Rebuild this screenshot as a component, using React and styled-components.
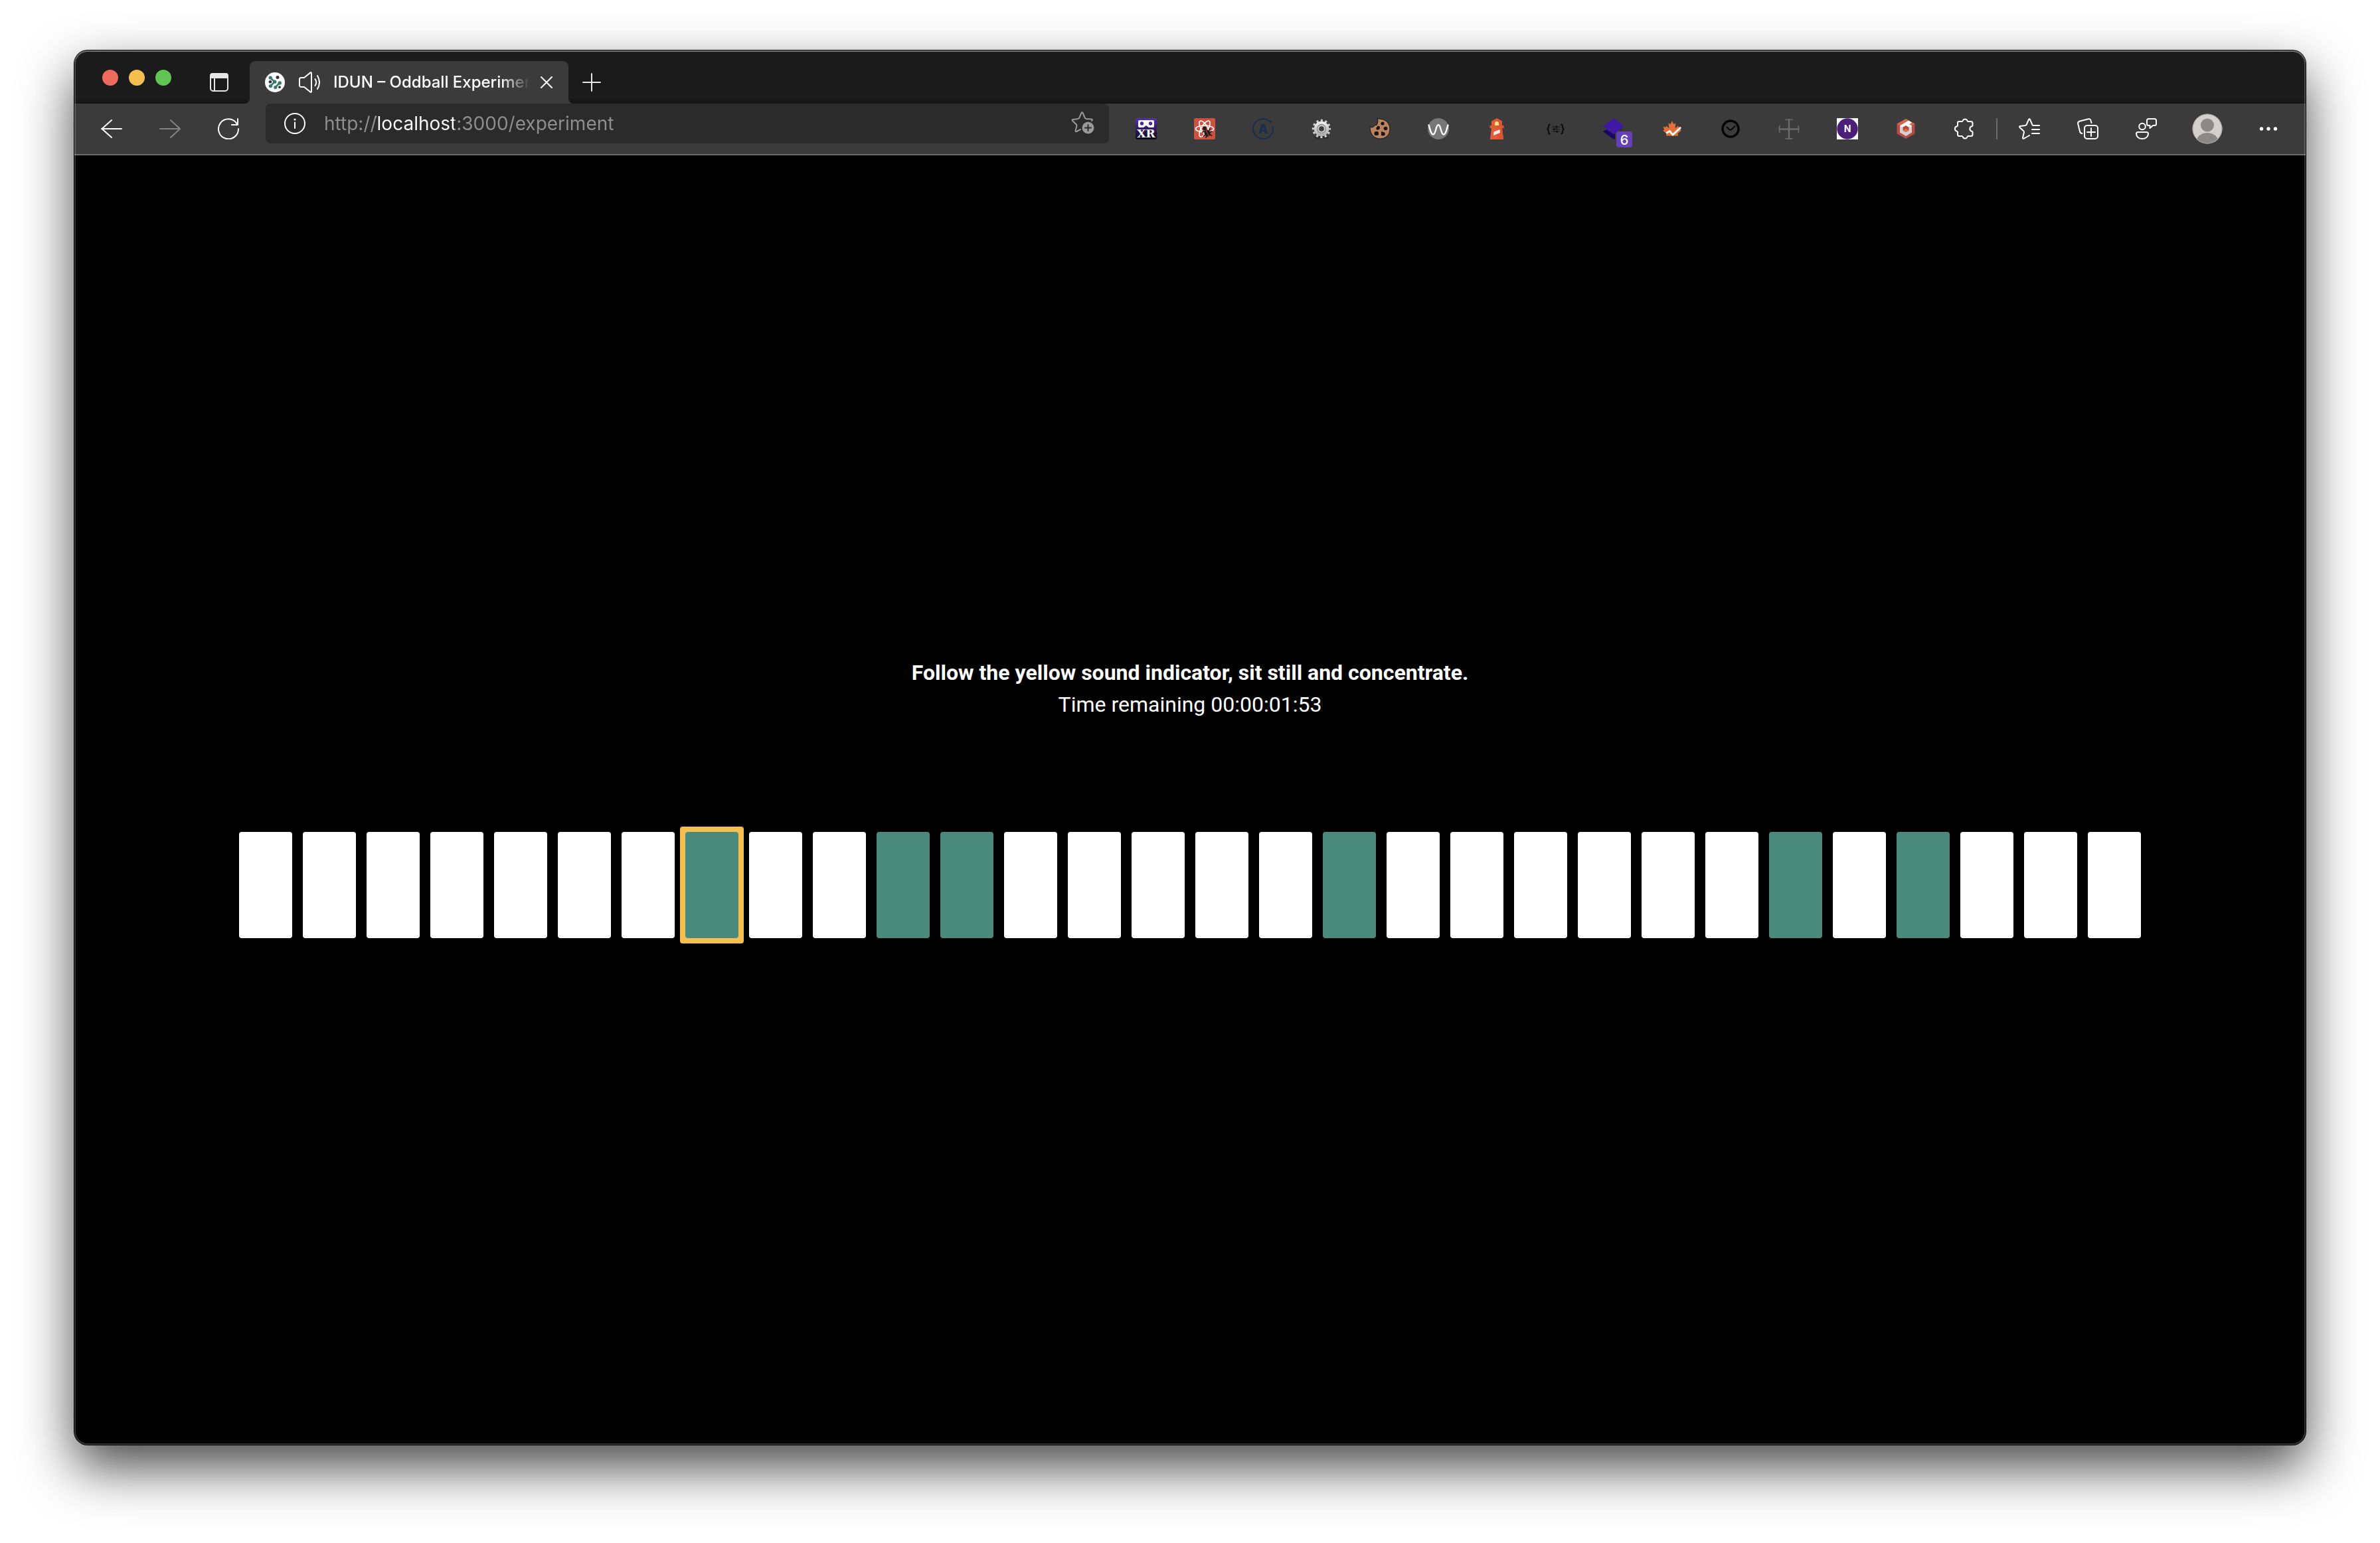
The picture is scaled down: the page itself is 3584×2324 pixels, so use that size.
import React from "react";
import styled, { createGlobalStyle, css } from "styled-components";

const colors = {
  frame: "#1b1b1b",
  chrome: "#3b3b3b",
  field: "#2b2b2b",
  line: "#6a6a6a",
  muted: "#8f8f8f",
  teal: "#4a8a7d",
  yellow: "#f4bf4f",
};

const GlobalStyle = createGlobalStyle`
  *, *::before, *::after { box-sizing: border-box; }
  body { margin: 0; background: #fff; }
  button, input { font: inherit; color: inherit; }
`;

const Desktop = styled.div`
  display: flex;
  min-height: 100vh;
  padding: 76px 112px 148px;
  color: #fff;
  font-family: Inter, "Liberation Sans", sans-serif;
`;

const BrowserWindow = styled.div`
  position: relative;
  display: flex;
  flex: 1;
  flex-direction: column;
  min-width: 0;
  border-radius: 20px;
  background: #000;
  box-shadow: 0 0 0 1px #000, 0 34px 80px rgba(0, 0, 0, 0.72);

  &::after {
    content: "";
    position: absolute;
    inset: 0;
    border-radius: inherit;
    box-shadow: inset 0 2px 0 rgba(255, 255, 255, 0.24),
      inset 0 0 0 2px rgba(255, 255, 255, 0.2);
    pointer-events: none;
  }
`;

const TitleBar = styled.header`
  display: flex;
  align-items: flex-end;
  height: 80px;
  padding-left: 42px;
  border-radius: 20px 20px 0 0;
  background: linear-gradient(to top, #141414, ${colors.frame} 8px);
`;

const TrafficLights = styled.div`
  display: flex;
  align-self: center;
  gap: 16px;
  padding-top: 2px;
`;

const Light = styled.button`
  width: 24px;
  height: 24px;
  padding: 0;
  border: 0;
  border-radius: 50%;
  background: ${(p) => p.$color};
`;

const IconButton = styled.button`
  display: flex;
  flex: none;
  align-items: center;
  justify-content: center;
  width: ${(p) => p.$width || 88}px;
  height: 64px;
  padding: 0;
  border: 0;
  background: none;
  color: ${(p) => p.$color || "#fff"};

  svg {
    display: block;
  }
`;

const TabActions = styled(IconButton)`
  margin: 0 16px 0 42px;
`;

const tabFoot = css`
  content: "";
  position: absolute;
  bottom: 0;
  width: 8px;
  height: 8px;
`;

const Tab = styled.div`
  position: relative;
  display: flex;
  align-items: center;
  gap: 20px;
  width: 480px;
  height: 64px;
  padding: 0 12px 0 22px;
  border-radius: 8px 8px 0 0;
  background: ${colors.chrome};

  &::before {
    ${tabFoot}
    right: 100%;
    background: radial-gradient(circle at 0 0, transparent 8px, ${colors.chrome} 8px);
  }
  &::after {
    ${tabFoot}
    left: 100%;
    background: radial-gradient(circle at 100% 0, transparent 8px, ${colors.chrome} 8px);
  }
  & > svg {
    flex: none;
  }
`;

const TabTitle = styled.span`
  flex: 1;
  min-width: 0;
  margin-right: -16px;
  overflow: hidden;
  font-size: 24px;
  font-weight: 500;
  line-height: 32px;
  white-space: nowrap;
  mask-image: linear-gradient(to left, transparent, #000 44px);
`;

const Toolbar = styled.nav`
  display: flex;
  align-items: center;
  height: 78px;
  padding: 0 12px;
  border-bottom: 2px solid ${colors.line};
  background: ${colors.chrome};
`;

const AddressBar = styled.form`
  display: flex;
  flex: 1;
  align-items: center;
  align-self: flex-start;
  min-width: 0;
  height: 60px;
  margin: 0 12px;
  border-radius: 8px;
  background: ${colors.field};
`;

const Address = styled.input`
  flex: 1;
  min-width: 0;
  height: 60px;
  padding: 0;
  border: 0;
  outline: 0;
  background: linear-gradient(
    to right,
    ${colors.muted} 78px,
    #fff 78px 196px,
    ${colors.muted} 196px
  );
  background-clip: text;
  -webkit-background-clip: text;
  -webkit-text-fill-color: transparent;
  font-size: 28px;
`;

const Divider = styled.span`
  width: 2px;
  height: 32px;
  margin: 0 4px;
  background: ${colors.line};
`;

const IconWithBadge = styled.span`
  position: relative;
`;

const Badge = styled.span`
  position: absolute;
  top: 20px;
  left: 20px;
  width: 24px;
  height: 24px;
  border-radius: 4px;
  background: #6640b7;
  font-size: 20px;
  font-weight: 500;
  line-height: 26px;
  text-align: center;
`;

const Experiment = styled.main`
  display: flex;
  flex: 1;
  flex-direction: column;
  align-items: center;
  justify-content: center;
  gap: 160px;
  font-family: Roboto, sans-serif;
`;

const Message = styled.div`
  font-size: 32px;
  line-height: 48px;
  text-align: center;
`;

const Instruction = styled.h1`
  margin: 0;
  font-size: inherit;
  font-weight: 700;
`;

const Remaining = styled.p`
  margin: 0;
`;

const Sequence = styled.ol`
  display: flex;
  justify-content: center;
  width: 100%;
  margin: 0;
  padding: 0;
  list-style: none;
`;

const Slot = styled.li`
  flex: 0 1 96px;
  padding: 8px;
  border-radius: 4px;
  background: ${(p) => (p.$active ? colors.yellow : "transparent")};
`;

const Tone = styled.div`
  height: 160px;
  border-radius: 4px;
  background: ${(p) => (p.$odd ? colors.teal : "#fff")};
`;

function Icon({ size = 32, width = 2, children }) {
  return (
    <svg
      width={size}
      height={size}
      viewBox={`0 0 ${size} ${size}`}
      fill="none"
      stroke="currentColor"
      strokeWidth={width}
      strokeLinecap="round"
      strokeLinejoin="round"
      aria-hidden="true"
    >
      {children}
    </svg>
  );
}

const TabActionsIcon = () => (
  <Icon size={28}>
    <rect x="1" y="1" width="26" height="26" rx="4" />
    <path d="M0 8V4a4 4 0 0 1 4-4h20a4 4 0 0 1 4 4v4z" fill="currentColor" stroke="none" />
    <path d="M7 8v19" />
  </Icon>
);

const IdunIcon = () => (
  <Icon width={2.6}>
    <circle cx="16" cy="16" r="15" fill="#fff" stroke="none" />
    <g stroke="#38786f">
      <path d="M9 9l6.5 6.2-6 6.3M17 23l6-6" />
    </g>
    <g fill="#38786f" stroke="none">
      <circle cx="9.2" cy="9" r="2.6" />
      <circle cx="15.8" cy="15.2" r="2.6" />
      <circle cx="9.5" cy="21.6" r="2.7" />
      <circle cx="16.8" cy="23.6" r="2.6" />
      <circle cx="23.2" cy="17" r="2.8" />
    </g>
    <g fill="#333" stroke="none">
      <circle cx="20" cy="8.4" r="2.5" />
      <circle cx="9" cy="15.2" r="2.3" />
      <circle cx="23" cy="23.2" r="1.9" />
    </g>
  </Icon>
);

const SpeakerIcon = () => (
  <Icon>
    <path d="M8 9h-4.500a2.500 2.500 0 0 0-2.500 2.500v9a2.500 2.500 0 0 0 2.500 2.500H8l9.500 7.600c.8.600 1.500.3 1.500-.6v-28c0-.9-.7-1.200-1.500-.6z" />
    <path d="M24.500 11q3.500 5 0 10M28 6q6 10 0 20" />
  </Icon>
);

const CloseIcon = () => (
  <Icon size={18}>
    <path d="M1 1l16 16M17 1L1 17" />
  </Icon>
);

const PlusIcon = () => (
  <Icon size={28}>
    <path d="M14 1v26M1 14h26" />
  </Icon>
);

const BackIcon = () => (
  <Icon>
    <path d="M31 16H1M16 3L1.500 16 16 29" />
  </Icon>
);

const ForwardIcon = () => (
  <Icon>
    <path d="M1 16h30M17 3l14 13-14 13" />
  </Icon>
);

const ReloadIcon = () => (
  <Icon>
    <path d="M31 16A15 15 0 1 1 28.500 8" />
    <path d="M30 1v9h-9" />
  </Icon>
);

const InfoIcon = () => (
  <Icon>
    <circle cx="16" cy="16" r="15" />
    <path d="M16 14.500V23" />
    <circle cx="16" cy="10" r="1.600" fill="currentColor" stroke="none" />
  </Icon>
);

const AddFavoriteIcon = () => (
  <Icon size={36}>
    <path d="M31 14l1-1.500-1-1-8.500-.5-1.500-1-3.500-8c-.5-1-1.500-1-2 0l-3.500 8-1.500 1-8 1c-1 0-1.200 1-.5 1.700l6 6 .5 1.800L6.500 29c0 1 .8 1.500 1.600 1l5.900-3" />
    <circle cx="25.500" cy="24.500" r="9" fill="currentColor" stroke="none" />
    <path d="M25.500 20v9M21 24.500h9" stroke={colors.field} />
  </Icon>
);

const XrIcon = () => (
  <Icon>
    <defs>
      <linearGradient id="xr" x1="0" y1="0" x2="0" y2="1">
        <stop offset="0" stopColor="#5530ab" />
        <stop offset="1" stopColor="#0b0818" />
      </linearGradient>
    </defs>
    <g stroke="none">
      <rect width="32" height="32" rx="3" fill="url(#xr)" />
      <path d="M6 3h20q2 0 2 2v7q0 2-2 2h-6l-4-3-4 3H6q-2 0-2-2V5q0-2 2-2z" fill="#fff" />
      <circle cx="9.500" cy="8" r="2.700" fill="#47288f" />
      <circle cx="22.500" cy="8" r="2.700" fill="#47288f" />
      <text x="16" y="29" fill="#fff" fontFamily="DejaVu Serif, serif" fontSize="17" fontWeight="700" textAnchor="middle">
        XR
      </text>
    </g>
  </Icon>
);

const ReactIcon = () => (
  <Icon width={1.7}>
    <rect width="32" height="32" rx="2" fill="#cb5140" stroke="none" />
    <g stroke="#fff">
      <ellipse cx="16" cy="16" rx="13.500" ry="5" />
      <ellipse cx="16" cy="16" rx="13.500" ry="5" transform="rotate(60 16 16)" />
      <ellipse cx="16" cy="16" rx="13.500" ry="5" transform="rotate(120 16 16)" />
    </g>
    <g fill="#1d1b1c" stroke="#1d1b1c">
      <path d="M15 19l9-1 3 8-4 5-6-1z" fill="#cb5140" stroke="none" />
      <circle cx="16" cy="15.500" r="2.800" stroke="none" />
      <ellipse cx="20" cy="22.500" rx="4.200" ry="5.500" transform="rotate(-28 20 22.500)" stroke="none" />
      <path d="M15 20l-2 1M16.500 25l-2 2M19 27l-1 2M23 18l1-2M24 21l3-1M24.500 25l2 1" />
      <path d="M18 18l4.500 9" stroke="#cb5140" strokeWidth="1" />
    </g>
  </Icon>
);

const ApolloIcon = () => (
  <Icon>
    <g stroke="#1b2d4d">
      <path d="M30.500 12A15 15 0 1 1 25 4" />
      <circle cx="27.500" cy="5.500" r="2" fill="#1b2d4d" stroke="none" />
      <text x="16" y="22.500" fill="#1b2d4d" stroke="none" fontSize="19" fontWeight="800" textAnchor="middle">
        A
      </text>
    </g>
  </Icon>
);

const GearIcon = () => (
  <Icon>
    <defs>
      <linearGradient id="gear" x1="0" y1="0" x2="0" y2="1">
        <stop offset="0" stopColor="#f2f2f2" />
        <stop offset="1" stopColor="#a9a9a9" />
      </linearGradient>
    </defs>
    <ellipse cx="16" cy="29" rx="11" ry="2.500" fill="#2b2b2b" stroke="none" />
    <circle cx="16" cy="16" r="12.500" stroke="#cfcfcf" strokeWidth="3.400" strokeLinecap="butt" strokeDasharray="3.100 3.445" strokeDashoffset="1.550" />
    <circle cx="16" cy="16" r="11.300" fill="url(#gear)" stroke="none" />
    <circle cx="16" cy="16" r="6.500" fill="#c9c9c9" stroke="#8d8d8d" strokeWidth="1.400" />
    <circle cx="16" cy="16" r="3.800" fill="#3b3b3b" stroke="none" />
  </Icon>
);

const CookieIcon = () => (
  <Icon width={1}>
    <path
      d="M12 1C22 0 31 6 31 16S24 31 16 31 1 25 1 13c2 1 4 1 5.500 0 1-2 2-2.500 4.500-2.500C13 7 13.500 4 12 1z"
      fill="#b9835f"
      stroke="#151010"
    />
    <g fill="#1b1412" stroke="none">
      <circle cx="20" cy="8" r="2.600" />
      <path d="M10 15l3-3.500 3 1-.5 4-4 1.500z" />
      <circle cx="24.500" cy="15.500" r="2.800" />
      <rect x="7.500" y="20" width="6.500" height="6" rx="2.500" />
      <path d="M18 20l5 1.500 1 3-2 2-4-.5z" />
    </g>
  </Icon>
);

const WaveIcon = () => (
  <Icon width={2.4}>
    <circle cx="16" cy="16" r="16" fill="#777" stroke="none" />
    <path d="M1.500 10.500C3 13 4 24 8 24.500c4.500 0 4-14.500 8-14.500s3.500 14.500 8 14.500c4 0 5-11 6.500-14" stroke="#fff" />
  </Icon>
);

const LighthouseIcon = () => (
  <Icon>
    <g stroke="none">
      <path d="M16 0l8 4.500V11h2.500v4H24l2.200 17H5.800L8 15H5.500v-4H8V4.500z" fill="#e55b36" />
      <path d="M16 0l8 4.500V11h2.500v4H24l2.200 17H16z" fill="#d9552f" opacity=".7" />
      <path d="M13 11V8a3 3 0 0 1 6 0v3z" fill="#f7e48c" />
      <path d="M11.500 20.500l9-3.500.5 5-10 4z" fill="#ededed" />
    </g>
  </Icon>
);

const BracesIcon = () => (
  <Icon>
    <g stroke="#0c0c0c">
      <path d="M8 9.500q-2 0-2 2.500c0 2.500 0 4-2 4.500 2 .5 2 2 2 4.500q0 2.500 2 2.500M25 9.500q2 0 2 2.500c0 2.500 0 4 2 4.500-2 .5-2 2-2 4.500q0 2.500-2 2.500" />
      <path d="M12 13h10M12 16.500h10M12 20h10" strokeWidth="1.200" />
      <path d="M18 12v2M14.500 15.500v2M18.500 19v2" strokeWidth="1.800" />
    </g>
  </Icon>
);

const LayersIcon = () => (
  <IconWithBadge>
    <Icon>
      <g stroke="none">
        <path d="M0 20l5-3 11 7 2-1v8l-2 1z" fill="#190766" />
        <path d="M24 18l3-1 2 1z" fill="#190766" />
        <path d="M16 0l16 12-16 12L0 12z" fill="#4018a6" />
      </g>
    </Icon>
    <Badge>6</Badge>
  </IconWithBadge>
);

const LeafIcon = () => (
  <Icon width={2.6}>
    <path
      d="M16 4l2.500 5 3-1.500-1 8 4.500-4 1 2 4-.5-1.500 4 1.500 1.500-5.500 4.500.5 3.500H7l.5-3.500L2.500 19 4 17l-1.500-4 4 .5 1-2 4 4-1-8 3 1.500z"
      fill="#e2703a"
      stroke="none"
    />
    <path d="M7 22.500l5.500-3 4.500 5.500L29 14" stroke="#fff" strokeLinecap="butt" strokeLinejoin="miter" />
  </Icon>
);

const ClockIcon = () => (
  <Icon>
    <g stroke="#050505">
      <circle cx="16" cy="16" r="12" strokeWidth="3.400" />
      <path d="M10.500 13.500l4 4h2.500l5.500-5.500" strokeWidth="1.800" />
    </g>
  </Icon>
);

const CrossIcon = () => (
  <Icon width={1.6}>
    <g stroke="#6c6c6c">
      <path d="M16 2v29M2 16.500h28" strokeWidth="2.400" />
      <path d="M11 2.500q5-1.500 10 0M11 30.500q5 1.500 10 0M2 11.500q-1.500 5 0 10M30 11.500q1.500 5 0 10" />
    </g>
  </Icon>
);

const NIcon = () => (
  <Icon>
    <g stroke="none">
      <rect width="32" height="32" fill="#fff" />
      <circle cx="16" cy="16" r="15.700" fill="#4b1f78" />
      <text x="16" y="21" fill="#fff" fontSize="14" fontWeight="700" textAnchor="middle">
        N
      </text>
    </g>
  </Icon>
);

const HexIcon = () => (
  <Icon>
    <g stroke="none">
      <path d="M16 1l13.500 7.500v15L16 31 2.500 23.500v-15z" fill="#b44a4a" />
      <path d="M16 1l13.500 7.500L16 16 2.500 8.500z" fill="#d0694f" />
      <path d="M16 6.500l9 5v10l-9 5.500-9-5.500v-10z" fill="#d8d2cc" />
      <path d="M7 11.500l13-8 5 3-4 3 4 2-9 5z" fill="#fff" />
      <path d="M16 11l4.500 2.500v5L16 21l-4.500-2.500v-5z" fill="#b44a4a" />
      <path d="M11.500 18.500L16 16l4.500 2.500L16 21z" fill="#df7347" />
    </g>
  </Icon>
);

const PuzzleIcon = () => (
  <Icon>
    <path d="M8 5h4.500c.8 0 1-.6 1.200-1.200a3.600 3.600 0 0 1 6.800 0c.2.600.4 1.200 1.200 1.200H26q2.500 0 2.500 2.500V11c0 .8-.4 1.200-1.200 1.300a3.800 3.800 0 0 0 0 7.400c.8.100 1.200.5 1.200 1.300v3.500q0 2.500-2.500 2.500h-4.300c-.8 0-1 .6-1.200 1.200a3.600 3.600 0 0 1-6.800 0c-.2-.6-.4-1.200-1.200-1.200H8.500Q6 27 6 24.500V21c0-.8-.4-1.200-1.200-1.300a3.800 3.800 0 0 1 0-7.400C5.600 12.200 6 11.800 6 11V7q0-2 2-2z" />
  </Icon>
);

const FavoritesIcon = () => (
  <Icon>
    <path d="M31 11h-9.500l-1-.8L17 2c-.4-1-1.600-1-2 0l-3.500 8-1.500 1-8 1c-1 .2-1.200 1.200-.5 1.900l6 5.600.5 1.500L6 29.500c-.1 1.200.8 1.800 1.700 1.200L16 26M20 17h11M20 23h11" />
  </Icon>
);

const CollectionsIcon = () => (
  <Icon>
    <rect x="11" y="11" width="20" height="20" rx="4" />
    <path d="M21 15v12M15 21h12" />
    <path d="M21.500 7l-1-3.500c-.4-1.800-2-2.800-3.800-2.300L4 4.500C2 5 .8 6.500 1.200 8.500L4 20c.4 1.800 1.500 2.800 3.500 3" />
  </Icon>
);

const ShareIcon = () => (
  <Icon>
    <circle cx="10" cy="12.500" r="4.800" />
    <path d="M3.500 21h13q2.500 0 2.500 2.500c0 4.500-4 7.500-9 7.500s-9-3-9-7.500Q1 21 3.500 21z" />
    <path d="M19.500 1h9Q31 1 31 3.500v5q0 2.500-2.500 2.500H26l-4.500 4v-4h-2Q17 11 17 8.500v-5Q17 1 19.500 1z" />
  </Icon>
);

const AvatarIcon = () => (
  <Icon size={46}>
    <defs>
      <clipPath id="avatar">
        <circle cx="23" cy="23" r="22.500" />
      </clipPath>
    </defs>
    <g stroke="none" clipPath="url(#avatar)">
      <rect width="46" height="46" fill="#d2d1cd" />
      <circle cx="23" cy="17.500" r="10" fill="#8b8a88" />
      <ellipse cx="23" cy="43.500" rx="17" ry="14.500" fill="#8b8a88" />
    </g>
    <circle cx="23" cy="23" r="22" stroke="#a3a29f" strokeWidth="1" />
  </Icon>
);

const MoreIcon = () => (
  <Icon>
    <g fill="currentColor" stroke="none">
      <circle cx="5.500" cy="16" r="2.700" />
      <circle cx="16" cy="16" r="2.700" />
      <circle cx="26.500" cy="16" r="2.700" />
    </g>
  </Icon>
);

const extensions = [
  ["WebXR emulator", XrIcon],
  ["React developer tools", ReactIcon],
  ["Apollo client tools", ApolloIcon],
  ["Settings extension", GearIcon],
  ["Cookie editor", CookieIcon],
  ["Wave", WaveIcon],
  ["Lighthouse", LighthouseIcon],
  ["JSON viewer", BracesIcon],
  ["Layers", LayersIcon],
  ["Leaf", LeafIcon],
  ["Clock", ClockIcon],
  ["Crosshair", CrossIcon],
  ["N", NIcon],
  ["Hexagon", HexIcon],
  ["Extensions", PuzzleIcon],
];

const TONE_COUNT = 30;
const ACTIVE_TONE = 7;
const ODD_TONES = new Set([7, 10, 11, 17, 24, 26]);

export default function App() {
  return (
    <>
      <GlobalStyle />
      <Desktop>
        <BrowserWindow>
          <TitleBar>
            <TrafficLights>
              <Light $color="#ed6a5e" aria-label="Close window" />
              <Light $color="#f4bf4f" aria-label="Minimise window" />
              <Light $color="#61c554" aria-label="Zoom window" />
            </TrafficLights>
            <TabActions $width={60} $color="#e6e6e6" aria-label="Tab actions">
              <TabActionsIcon />
            </TabActions>
            <Tab>
              <IdunIcon />
              <SpeakerIcon />
              <TabTitle>IDUN – Oddball Experiment</TabTitle>
              <IconButton $width={42} aria-label="Close tab">
                <CloseIcon />
              </IconButton>
            </Tab>
            <IconButton $width={70} $color="#e6e6e6" aria-label="New tab">
              <PlusIcon />
            </IconButton>
          </TitleBar>

          <Toolbar>
            <IconButton aria-label="Back">
              <BackIcon />
            </IconButton>
            <IconButton $color="#838383" aria-label="Forward">
              <ForwardIcon />
            </IconButton>
            <IconButton aria-label="Reload">
              <ReloadIcon />
            </IconButton>
            <AddressBar onSubmit={(e) => e.preventDefault()}>
              <IconButton type="button" aria-label="Site information">
                <InfoIcon />
              </IconButton>
              <Address
                aria-label="Address"
                spellCheck={false}
                defaultValue="http://localhost:3000/experiment"
              />
              <IconButton type="button" $width={78} $color="#9a9a9a" aria-label="Add to favorites">
                <AddFavoriteIcon />
              </IconButton>
            </AddressBar>
            {extensions.map(([name, Glyph]) => (
              <IconButton key={name} aria-label={name}>
                <Glyph />
              </IconButton>
            ))}
            <Divider />
            <IconButton aria-label="Favorites">
              <FavoritesIcon />
            </IconButton>
            <IconButton aria-label="Collections">
              <CollectionsIcon />
            </IconButton>
            <IconButton aria-label="Share">
              <ShareIcon />
            </IconButton>
            <IconButton $width={96} aria-label="Profile">
              <AvatarIcon />
            </IconButton>
            <IconButton aria-label="More">
              <MoreIcon />
            </IconButton>
          </Toolbar>

          <Experiment>
            <Message>
              <Instruction>Follow the yellow sound indicator, sit still and concentrate.</Instruction>
              <Remaining>Time remaining 00:00:01:53</Remaining>
            </Message>
            <Sequence>
              {Array.from({ length: TONE_COUNT }, (_, i) => (
                <Slot key={i} $active={i === ACTIVE_TONE}>
                  <Tone $odd={ODD_TONES.has(i)} />
                </Slot>
              ))}
            </Sequence>
          </Experiment>
        </BrowserWindow>
      </Desktop>
    </>
  );
}
